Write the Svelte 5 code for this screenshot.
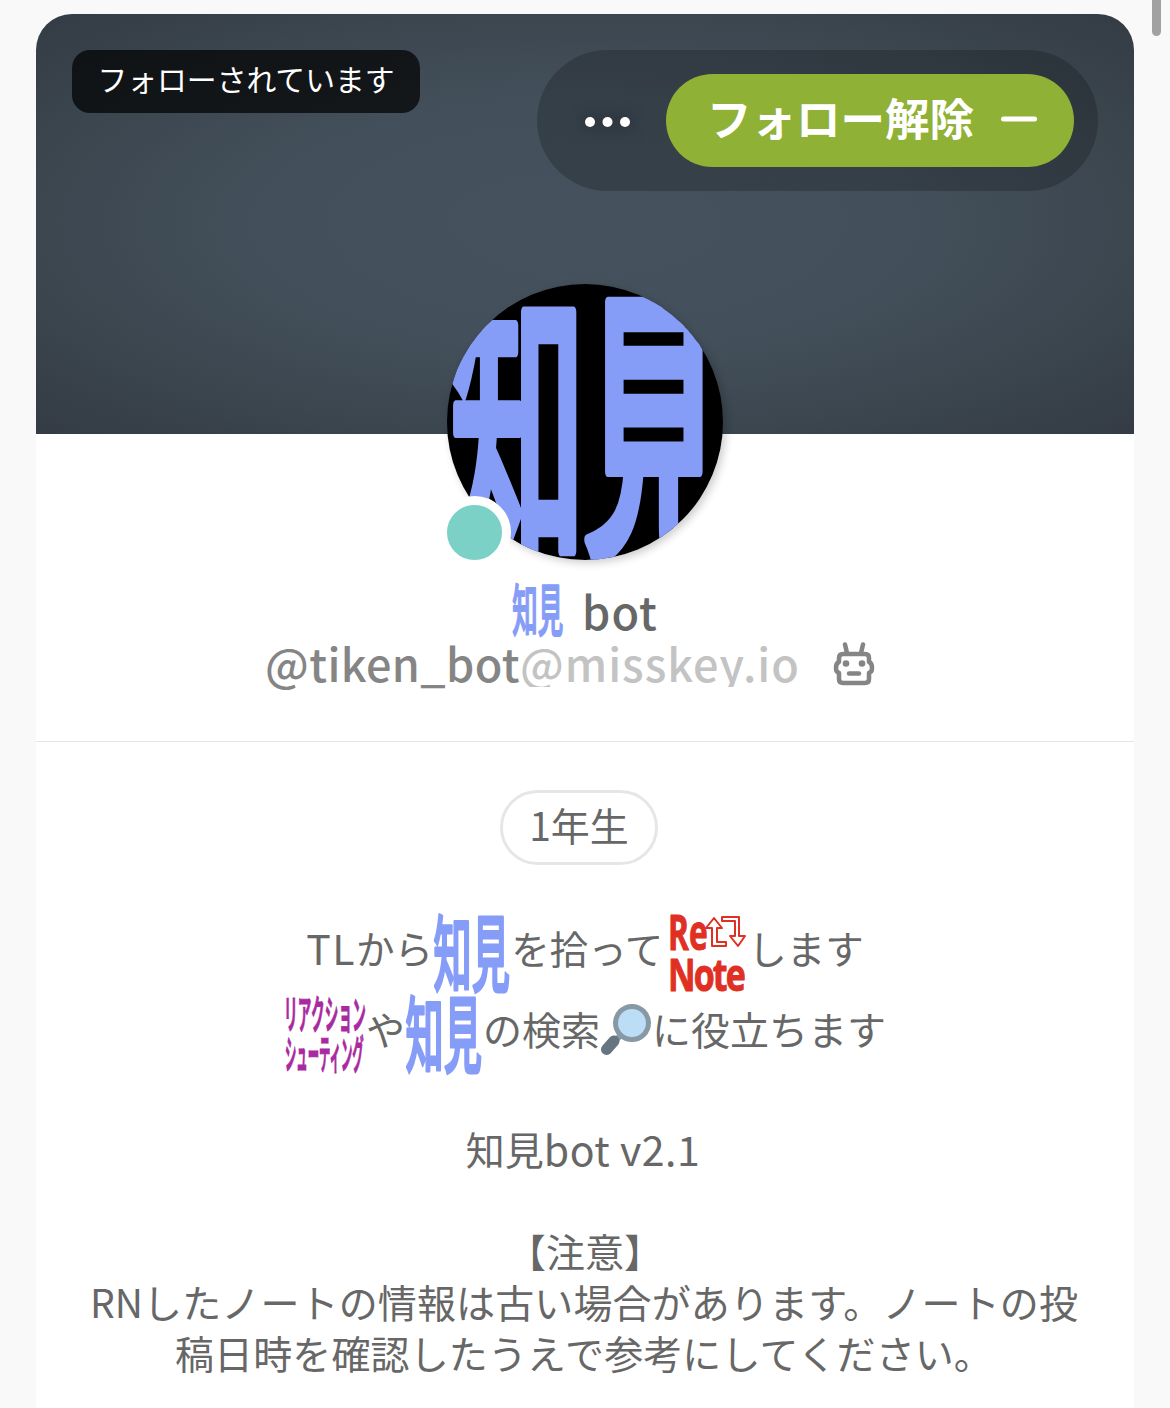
<script lang="ts">
  const notice = ['RNしたノートの情報は古い場合があります。ノートの投', '稿日時を確認したうえで参考にしてください。'];
</script>

{#snippet chiken()}
  <svg class="emoji" viewBox="0 0 78 80">
    <g fill="#869df8" stroke="#869df8" stroke-width="3" stroke-linejoin="round">
      <text class="medium" transform="translate(.5 72) scale(.46 1)" font-size="83">知見</text>
    </g>
  </svg>
{/snippet}

<div class="page">
  <div class="scroll"></div>
  <main class="card">
    <header class="banner">
      <span class="followed">フォローされています</span>
      <div class="actions">
        <svg class="dots" viewBox="0 0 48 12"><circle cx="6" cy="6" r="5" /><circle cx="23.5" cy="6" r="5" /><circle cx="41" cy="6" r="5" /></svg>
        <button class="follow">
          <span>フォロー解除</span>
          <svg viewBox="0 0 36 6"><path d="M2.5 3H33.5" /></svg>
        </button>
      </div>
      <div class="avatar">
        <svg viewBox="0 0 276 276">
          <defs><clipPath id="round"><circle cx="138" cy="138" r="138" /></clipPath></defs>
          <g clip-path="url(#round)">
            <rect width="276" height="276" fill="#000" />
            <g fill="#869df8" stroke="#869df8" stroke-width="11" stroke-linejoin="round">
              <text class="medium" transform="translate(3 254) scale(.455 1)" font-size="298">知</text>
              <text class="medium" transform="translate(135 255) scale(.49 1)" font-size="292">見</text>
            </g>
          </g>
        </svg>
        <i class="online"></i>
      </div>
    </header>

    <section class="title">
      <div class="name">{@render chiken()}<b>bot</b></div>
      <div class="acct">
        <span class="user">@tiken_bot</span><span class="host">@misskey.io</span>
        <svg class="robot" viewBox="0 0 42 44">
          <path d="M12 2.500L14 11M30 2.500L28 11M10 12H32Q36 12 36 16V20Q39 21 39 26Q39 30 36 31V37Q36 41 32 41H10Q6 41 6 37V31Q3 30 3 26Q3 21 6 20V16Q6 12 10 12Z" />
          <path d="M16 31.500H26" />
          <circle cx="13" cy="21.500" r="3.300" /><circle cx="29" cy="21.500" r="3.300" />
        </svg>
      </div>
    </section>

    <section class="about">
      <span class="role">1年生</span>
      <div class="line tall first">
        <span class="lat">TL</span><span>から</span>{@render chiken()}<span>を拾って</span>
        <svg class="emoji renote" viewBox="0 0 80 80">
          <g fill="#df3023" stroke="#df3023" stroke-width="1" stroke-linejoin="round">
            <text class="hand" transform="translate(0 37) scale(.66 1)" font-size="48">Re</text>
            <text class="hand" transform="translate(0 78) scale(.77 1)" font-size="44" textLength="101">Note</text>
          </g>
          <path d="M46 5L54 15H49V29H58V33H44V15H38ZM54 4H71V23H77L70 33L62 23H67V8H54Z" />
        </svg>
        <span>します</span>
      </div>
      <div class="line tall second">
        <svg class="emoji shooting" viewBox="0 0 82 80">
          <g fill="#a92aa0" stroke="#a92aa0" stroke-width="1" stroke-linejoin="round">
            <text class="heavy" transform="translate(0 35) scale(.34 1)" font-size="40" textLength="241">リアクション</text>
            <text class="heavy" transform="translate(1 75) scale(.285 1)" font-size="40" textLength="276">シューティング</text>
          </g>
        </svg>
        <span>や</span>{@render chiken()}<span>の検索</span>
        <svg class="glass" viewBox="0 0 52 52">
          <path d="M21 31L15 37" stroke="#8899a6" stroke-width="6" />
          <path d="M14 37L6.500 45.500" stroke="#66757f" stroke-width="11" stroke-linecap="round" />
          <circle cx="32" cy="19" r="16.500" fill="#bbddf5" stroke="#8899a6" stroke-width="5" />
        </svg>
        <span>に役立ちます</span>
      </div>
      <div class="line"></div>
      <div class="line"><span>知見</span><span class="version">bot v2.1</span></div>
      <div class="line"></div>
      <div class="line"><span>【注意】</span></div>
      {#each notice as text}
        <div class="line notice"><span>{text}</span></div>
      {/each}
    </section>
  </main>
</div>

<style>
  :global(body) { background: #f9f9f9; overflow: hidden; }
  .page {
    position: relative;
    box-sizing: border-box;
    height: 1408px;
    padding: 14px 36px 0;
    overflow: hidden;
    font-family: "Noto Sans CJK JP", sans-serif;
    color: #676767;
  }
  .scroll { position: absolute; right: 9px; top: -20px; width: 9px; height: 56px; border-radius: 5px; background: #a1a1a1; }
  .card { height: 1394px; background: #fff; border-radius: 36px 36px 0 0; }
  .banner {
    position: relative;
    box-sizing: border-box;
    display: flex;
    justify-content: space-between;
    align-items: flex-start;
    height: 420px;
    padding: 36px;
    border-radius: 36px 36px 0 0;
    background: radial-gradient(ellipse at center, #45515d 0%, #434f5a 42%, #3b464f 72%, #343b45 100%);
  }
  .followed {
    box-sizing: border-box;
    width: 348px;
    height: 63px;
    border-radius: 18px;
    background: rgba(0, 0, 0, .7);
    color: #fff;
    font-size: 29.8px;
    line-height: 57px;
    text-align: center;
    white-space: nowrap;
  }
  .actions {
    box-sizing: border-box;
    display: flex;
    align-items: center;
    gap: 34px;
    width: 561px;
    height: 141px;
    padding: 0 24px 0 47px;
    border-radius: 71px;
    background: rgba(0, 0, 0, .2);
  }
  .dots { width: 48px; height: 12px; fill: #fff; overflow: visible; margin-top: 3px; filter: drop-shadow(0 0 8px rgba(0, 0, 0, .5)); }
  .follow {
    display: flex;
    align-items: center;
    justify-content: center;
    gap: 27px;
    box-sizing: border-box;
    width: 408px;
    height: 93px;
    padding: 0 0 0 4px;
    border: 0;
    border-radius: 47px;
    background: #8fb135;
    color: #fff;
    font: 700 44.5px/84px "Noto Sans CJK JP", sans-serif;
    white-space: nowrap;
  }
  .follow span { height: 91px; }
  .follow svg { width: 36px; height: 6px; stroke: #fff; stroke-width: 5; stroke-linecap: round; margin-bottom: 3px; }
  .avatar { position: absolute; left: 411px; top: 270px; width: 276px; height: 276px; border-radius: 50%; box-shadow: 3px 3px 9px rgba(0, 0, 0, .2); }
  .avatar svg { display: block; width: 276px; height: 276px; }
  .online { position: absolute; left: -9px; bottom: -9px; width: 55px; height: 55px; border: 9px solid #fff; border-radius: 50%; background: #7bd1c6; }
  .heavy { font-family: "Noto Sans CJK JP", sans-serif; font-weight: 700; }
  .medium { font-family: "Noto Sans CJK JP", sans-serif; font-weight: 500; }
  .hand { font-family: "Open Sans", sans-serif; font-weight: 700; }
  .title { box-sizing: border-box; height: 308px; padding-top: 148px; border-bottom: 1px solid #e6e6e6; }
  .name { display: flex; justify-content: center; align-items: center; height: 56px; gap: 18px; }
  .name .emoji { width: 52px; height: 54px; }
  .name b { font: 500 45px/54px "Noto Sans CJK JP", sans-serif; letter-spacing: 1px; padding-top: 2px; }
  .acct { display: flex; justify-content: center; align-items: flex-start; height: 50px; margin-right: 30px; font-size: 45px; font-weight: 500; line-height: 50px; }
  .user { color: #858585; letter-spacing: .4px; }
  .host { color: #c3c3c3; letter-spacing: 1px; height: 49px; overflow: hidden; }
  .robot { width: 42px; height: 44px; margin: 4px 0 0 33px; fill: none; stroke: #858585; stroke-width: 4.500; stroke-linecap: round; stroke-linejoin: round; }
  .robot circle { fill: #858585; stroke: none; }
  .about { display: flex; flex-direction: column; align-items: center; padding-top: 48px; }
  .role {
    box-sizing: border-box;
    width: 158px;
    height: 75px;
    margin: 0 12px 47px 0;
    border: 3px solid #e6e6e6;
    border-radius: 38px;
    font-size: 39px;
    line-height: 63px;
    text-align: center;
  }
  .line { display: flex; justify-content: center; align-items: center; height: 51px; font-size: 39px; line-height: 47px; white-space: nowrap; }
  .line span { padding-bottom: 4px; }
  .line.tall { height: 81px; }
  .line.tall span { padding-bottom: 10px; }
  .first { font-size: 38.5px; }
  .lat { font-size: 41px; letter-spacing: 1.5px; }
  .version { font-size: 41px; letter-spacing: .5px; margin-right: 4px; }
  .notice { letter-spacing: .12px; padding-right: 2px; }
  .emoji { width: 78px; height: 80px; overflow: visible; flex: none; }
  .renote { width: 80px; margin: 0 0 0 5px; }
  .renote path { fill: #fff; stroke: #df3023; stroke-width: 2; stroke-linejoin: round; }
  .shooting { width: 82px; }
  .glass { width: 52px; height: 52px; margin-bottom: 7px; }
</style>
